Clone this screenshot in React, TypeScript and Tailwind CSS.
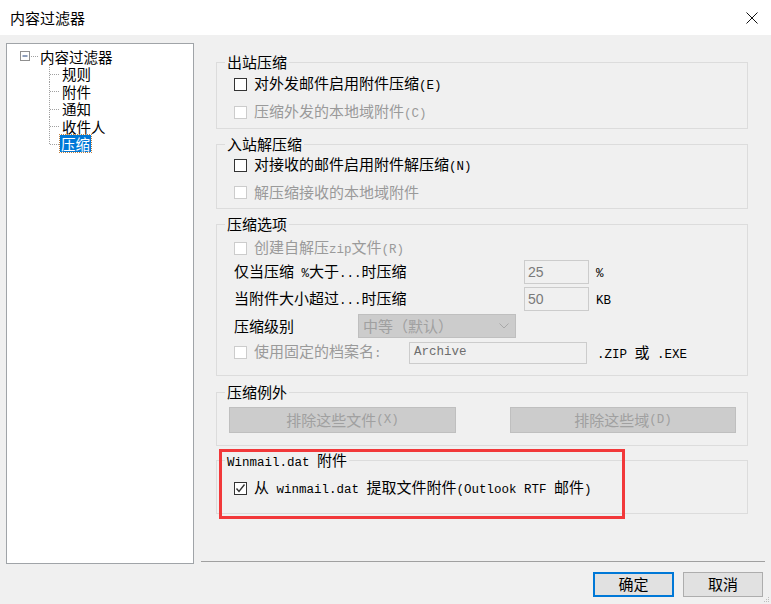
const cjk = "font-['Noto_Sans_CJK_SC',sans-serif]";

// ascii runs are drawn in a narrow mono face, like the SimSun fallback in the dialog
function Mixed({ text }: { text: string }) {
  const parts = text.split(/([\x20-\x7e]+)/).filter((p) => p !== "");
  return (
    <>
      {parts.map((p, i) =>
        /^[\x20-\x7e]+$/.test(p) ? (
          <span key={i} className="font-['Liberation_Mono',monospace] text-[12.5px] whitespace-pre">
            {p}
          </span>
        ) : (
          <span key={i}>{p}</span>
        )
      )}
    </>
  );
}

function CheckBox({ checked = false, disabled = false }: { checked?: boolean; disabled?: boolean }) {
  return (
    <span
      className={
        disabled
          ? "w-[13px] h-[13px] shrink-0 border border-[#cccccc] bg-white"
          : "w-[13px] h-[13px] shrink-0 border border-[#333333] bg-white flex items-center justify-center"
      }
    >
      {checked && (
        <svg width="11" height="11" viewBox="0 0 11 11">
          <polyline points="1.5,5.5 4,8.5 9.5,1.5" fill="none" stroke="#333" strokeWidth="1.4" />
        </svg>
      )}
    </span>
  );
}

function CheckRow({ label, checked, disabled }: { label: string; checked?: boolean; disabled?: boolean }) {
  return (
    <div className={`flex items-center h-[18px] gap-[7px] ${disabled ? "text-[#9a9a9a]" : "text-black"}`}>
      <CheckBox checked={checked} disabled={disabled} />
      <span className="leading-[18px]">
        <Mixed text={label} />
      </span>
    </div>
  );
}

function Group({
  title,
  className,
  children,
}: {
  title: string;
  className: string;
  children?: React.ReactNode;
}) {
  return (
    <div className={`relative border border-[#dcdcdc] ${className}`}>
      <span className="absolute -top-[10px] left-[8px] px-[2px] bg-[#f0f0f0] leading-[18px] text-black">
        <Mixed text={title} />
      </span>
      {children}
    </div>
  );
}

function TreeChild({ label, last, selected }: { label: string; last?: boolean; selected?: boolean }) {
  return (
    <div className="flex items-center h-[17.5px] pl-[42px]">
      <svg width="11" height="18" className="shrink-0 overflow-visible">
        <line x1="0.5" y1="0" x2="0.5" y2={last ? 9 : 18} stroke="#a0a0a0" strokeDasharray="1 1" />
        <line x1="1" y1="9.5" x2="11" y2="9.5" stroke="#a0a0a0" strokeDasharray="1 1" />
      </svg>
      <span
        className={
          selected
            ? "px-[1px] leading-[17px] bg-[#0078d7] text-white outline-1 outline-dotted outline-[#c08040]"
            : "px-[2px] leading-[17px] text-black"
        }
      >
        {label}
      </span>
    </div>
  );
}

export default function App() {
  return (
    <div className={`w-[771px] h-[604px] bg-[#f0f0f0] flex flex-col text-[15px] ${cjk}`}>
      {/* title bar */}
      <div className="h-[35px] bg-white flex items-center justify-between pl-[10px] pr-[13px] shrink-0">
        <span className="text-black leading-[20px]">内容过滤器</span>
        <svg width="12" height="12" viewBox="0 0 12 12">
          <path d="M0.5 0.5 L11.5 11.5 M11.5 0.5 L0.5 11.5" stroke="#111" strokeWidth="1" />
        </svg>
      </div>

      <div className="flex px-[6px] pt-[8px] gap-[7px]">
        {/* tree */}
        <div className="w-[188px] h-[521px] bg-white border border-[#a0a4a8] pt-[3px] shrink-0 text-[14.5px]">
          <div className="flex items-center h-[18px] pl-[13px]">
            <svg width="20" height="18" className="shrink-0">
              <rect x="0.5" y="4.5" width="9" height="9" fill="#fdfdfd" stroke="#8f8f8f" />
              <line x1="2.5" y1="9" x2="7.5" y2="9" stroke="#1f3f78" />
              <line x1="11" y1="9.5" x2="19" y2="9.5" stroke="#a0a0a0" strokeDasharray="1 1" />
            </svg>
            <span className="leading-[17px] text-black">内容过滤器</span>
          </div>
          <TreeChild label="规则" />
          <TreeChild label="附件" />
          <TreeChild label="通知" />
          <TreeChild label="收件人" />
          <TreeChild label="压缩" last selected />
        </div>

        {/* right pane */}
        <div className="w-[564px] h-[521px] flex flex-col">
          <div className="pl-[15px] pr-[17px] flex flex-col">
            <Group title="出站压缩" className="mt-[19px] h-[67px] pt-[12px] pl-[17px] flex flex-col gap-[10px]">
              <CheckRow label="对外发邮件启用附件压缩(E)" />
              <CheckRow label="压缩外发的本地域附件(C)" disabled />
            </Group>

            <Group title="入站解压缩" className="mt-[15px] h-[65px] pt-[11px] pl-[17px] flex flex-col gap-[9px]">
              <CheckRow label="对接收的邮件启用附件解压缩(N)" />
              <CheckRow label="解压缩接收的本地域附件" disabled />
            </Group>

            <Group title="压缩选项" className="mt-[15px] h-[152px] pt-[14px] pl-[17px] flex flex-col gap-[3px]">
              <CheckRow label="创建自解压zip文件(R)" disabled />
              <div className="flex items-center h-[24px] text-black">
                <span className="w-[290px] leading-[18px]">
                  <Mixed text="仅当压缩 %大于...时压缩" />
                </span>
                <div className="w-[65px] h-[24px] border border-[#cccccc] bg-[#f0f0f0] pl-[3px] flex items-center text-[#7a7a7a] font-['Liberation_Sans',sans-serif] text-[14px]">
                  25
                </div>
                <span className="ml-[7px]">
                  <Mixed text="%" />
                </span>
              </div>
              <div className="flex items-center h-[24px] text-black">
                <span className="w-[290px] leading-[18px]">
                  <Mixed text="当附件大小超过...时压缩" />
                </span>
                <div className="w-[65px] h-[24px] border border-[#cccccc] bg-[#f0f0f0] pl-[3px] flex items-center text-[#7a7a7a] font-['Liberation_Sans',sans-serif] text-[14px]">
                  50
                </div>
                <span className="ml-[7px]">
                  <Mixed text="KB" />
                </span>
              </div>
              <div className="flex items-center h-[24px] text-black">
                <span className="w-[124px] leading-[18px]">压缩级别</span>
                <div className="w-[158px] h-[24px] border border-[#bfbfbf] bg-[#cccccc] pl-[4px] pr-[6px] flex items-center justify-between text-[#a0a0a0]">
                  <span>中等（默认）</span>
                  <svg width="10" height="6" viewBox="0 0 10 6">
                    <polyline points="0.5,0.5 5,5 9.5,0.5" fill="none" stroke="#a8a8a8" />
                  </svg>
                </div>
              </div>
              <div className="flex items-center h-[23px]">
                <CheckBox disabled />
                <span className="ml-[7px] w-[155px] leading-[18px] text-[#9a9a9a]">
                  <Mixed text="使用固定的档案名:" />
                </span>
                <div className="w-[178px] h-[22px] border border-[#cccccc] bg-[#f0f0f0] pl-[4px] flex items-center text-[#6d6d6d]">
                  <Mixed text="Archive" />
                </div>
                <span className="ml-[10px] text-black">
                  <Mixed text=".ZIP 或 .EXE" />
                </span>
              </div>
            </Group>

            <Group title="压缩例外" className="mt-[16px] h-[54px] pt-[14px] pl-[12px] pr-[11px] flex justify-between items-start">
              <div className="w-[227px] h-[26px] border border-[#bfbfbf] bg-[#cccccc] flex items-center justify-center text-[#a0a0a0]">
                <Mixed text="排除这些文件(X)" />
              </div>
              <div className="w-[226px] h-[26px] border border-[#bfbfbf] bg-[#cccccc] flex items-center justify-center text-[#a0a0a0]">
                <Mixed text="排除这些域(D)" />
              </div>
            </Group>

            <Group title="Winmail.dat 附件" className="mt-[14px] h-[54px] pt-[18px] pl-[17px]">
              <CheckRow label="从 winmail.dat 提取文件附件(Outlook RTF 邮件)" checked />
              {/* red highlight drawn over the group */}
              <div className="absolute left-[2px] -top-[12px] w-[406px] h-[70px] border-[3px] border-[#f2383a]" />
            </Group>
          </div>

          <div className="mt-auto mb-[2px] border-t border-[#a0a0a0]" />
        </div>
      </div>

      {/* dialog buttons */}
      <div className="flex justify-end gap-[9px] pr-[8px] mt-[8px] relative">
        <div className="w-[81px] h-[25px] border-2 border-[#0078d7] bg-[#e1e1e1] flex items-center justify-center text-black">
          确定
        </div>
        <div className="w-[80px] h-[25px] border border-[#adadad] bg-[#e1e1e1] flex items-center justify-center text-black">
          取消
        </div>
        <svg width="6" height="6" className="absolute right-[1px] top-[25px]">
          <rect x="4" y="0" width="1" height="1" fill="#bdbdbd" />
          <rect x="2" y="2" width="1" height="1" fill="#bdbdbd" />
          <rect x="4" y="2" width="1" height="1" fill="#bdbdbd" />
          <rect x="0" y="4" width="1" height="1" fill="#bdbdbd" />
          <rect x="2" y="4" width="1" height="1" fill="#bdbdbd" />
          <rect x="4" y="4" width="1" height="1" fill="#bdbdbd" />
        </svg>
      </div>
    </div>
  );
}
